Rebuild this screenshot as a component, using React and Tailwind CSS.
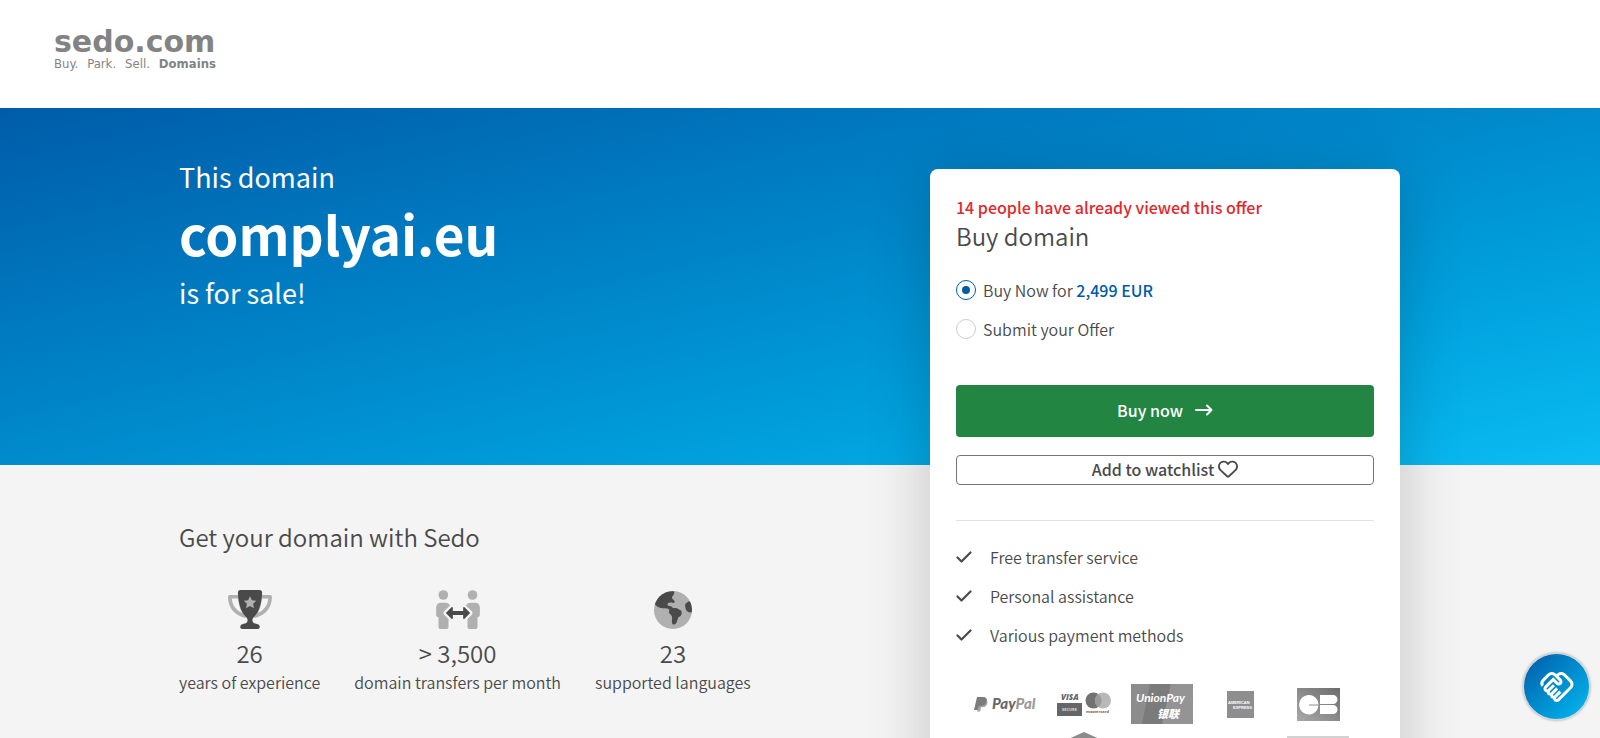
import React, { useState } from 'react';
import { FaRegHeart } from 'react-icons/fa6';
import { MdOutlineHandshake } from 'react-icons/md';

const SERVICES = ['Free transfer service', 'Personal assistance', 'Various payment methods'];

const Logo = () => (
  <a href="#" className="flex w-[162px] flex-col text-[#838383]">
    <span className="font-['DejaVu_Sans'] text-[30px] leading-7 font-bold">sedo.com</span>
    <span className="flex justify-between font-['DejaVu_Sans_Condensed','DejaVu_Sans'] text-[13px] leading-4">
      <span>Buy.</span>
      <span>Park.</span>
      <span>Sell.</span>
      <span className="font-bold">Domains</span>
    </span>
  </a>
);

const TrophyIcon = () => (
  <svg viewBox="0 0 576 512" className="h-[39px] w-11">
    <path
      fill="#b0b0b0"
      fillRule="evenodd"
      d="M24 64C10.7 64 0 74.7 0 88c0 92.6 33.5 157 78.5 200.7 44.3 43.1 98.3 64.8 138.1 75.8h142.8c39.9-11 93.9-32.7 138.2-75.8C542.5 245 576 180.6 576 88c0-13.3-10.7-24-24-24zM48.9 112h84.4c9.1 90.1 29.2 150.3 51.9 190.6-24.9-11-50.8-26.5-73.2-48.3-32-31.1-58-76-63-142.3zM464.1 254.3c-22.4 21.8-48.3 37.3-73.2 48.3 22.7-40.3 42.8-100.5 51.9-190.6h84.4c-5.1 66.3-31.1 111.2-63 142.3z"
    />
    <path
      fill="#4a4a4a"
      d="M162 0h252c20 0 34 15 33 34C441 195 398 300 342 350c-16 14-22 30-22 50 0 21 14 36 38 40l30 8c18 5 28 16 28 36 0 18-8 28-24 28H184c-16 0-24-10-24-28 0-20 10-31 28-36l30-8c24-4 38-19 38-40 0-20-6-36-22-50C178 300 135 195 129 34 128 15 142 0 162 0z"
    />
    <path fill="#b0b0b0" d="M288 82l25 51 57 8-41 40 10 57-51-27-51 27 10-57-41-40 57-8z" />
  </svg>
);

const TransferIcon = () => (
  <svg viewBox="0 0 131 117" className="h-[39px] w-11">
    <g fill="#b0b0b0">
      <circle cx="21.500" cy="15" r="14.500" />
      <circle cx="109" cy="15" r="14.500" />
      <path d="M14 38h14c8 0 14 5 15 12l-6 32v28c0 4-3 7-7 7H14c-4 0-7-3-7-7V82c-4-1-7-4-7-8V52c0-8 6-14 14-14z" />
      <path d="M117 38h-14c-8 0-14 5-15 12l6 32v28c0 4 3 7 7 7h16c4 0 7-3 7-7V82c4-1 7-4 7-8V52c0-8-6-14-14-14z" />
    </g>
    <path
      d="M29 69l17-17c2-2 4-1 4 2v9h31v-9c0-3 2-4 4-2l17 17-17 17c-2 2-4 1-4-2v-9H50v9c0 3-2 4-4 2z"
      fill="#4a4a4a"
      stroke="#f4f4f4"
      strokeWidth="14"
      strokeLinejoin="round"
      paintOrder="stroke"
    />
  </svg>
);

const GlobeIcon = () => (
  <svg viewBox="0 0 512 512" className="size-[38px]">
    <clipPath id="globe">
      <circle cx="256" cy="256" r="256" />
    </clipPath>
    <circle cx="256" cy="256" r="256" fill="#b0b0b0" />
    <g clipPath="url(#globe)" fill="#4a4a4a">
      <path d="M0 160C40 60 140 -10 270 5c6 22 2 40-18 62-14 16-12 30 2 44l20 22c10 14 2 30-14 27l-30-5c-30-5-48 6-48 26 0 12 10 18 24 20l22 4c14 2 22 12 24 25 30-6 72-2 88 20 8 12 28 10 32 28 6 30-6 58-32 70-18 8-18 24-24 44-8 28-20 56-44 60-20 2-28-14-30-36-2-30 6-56-2-78-8-20-34-28-38-52-2-16 6-28 2-38-8-16-46-8-82-16C60 220 30 210 0 160z" />
      <path d="M512 150l-44-12-32 22c-18 12-20 34-14 58 6 26 12 50 34 62l22 10 40-6z" />
    </g>
  </svg>
);

const STATS = [
  { icon: <TrophyIcon />, value: '26', label: 'years of experience' },
  { icon: <TransferIcon />, value: '> 3,500', label: 'domain transfers per month' },
  { icon: <GlobeIcon />, value: '23', label: 'supported languages' },
];

const CheckIcon = () => (
  <svg viewBox="0 0 16 12" className="h-3 w-4" fill="none" stroke="#4a4a4a" strokeWidth="2.200" strokeLinecap="round" strokeLinejoin="round">
    <path d="M1.500 6.500l4 4 9-9" />
  </svg>
);

const PayPal = () => (
  <svg viewBox="0 -4 64 24" className="h-6 w-16">
    <path fill="#7c7c7c" d="M3 1h6c3 0 4.500 1.800 4 4.500C12.400 8.500 10.500 10 7.500 10H5.500L4.500 14H0z" />
    <path fill="#a5a5a5" d="M12.500 4c1 .8 1.200 2 .9 3.300-.6 2.700-2.300 3.900-5 3.900H7L6.200 15.500H3L5 10h2.500c3 0 4.600-2 5-6z" />
    <text x="18" y="13" fontFamily="Lato" fontSize="15" fontWeight="900" fontStyle="italic" fill="#686868">
      Pay<tspan fill="#9a9a9a">Pal</tspan>
    </text>
  </svg>
);

const Cards = () => (
  <svg viewBox="0 0 55 24" className="h-6 w-[55px]">
    <text x="4" y="8" fontFamily="Open Sans" fontSize="8" fontWeight="800" fontStyle="italic" fill="#666">VISA</text>
    <path fill="#666" d="M0 11h25v13H0z" />
    <text x="5" y="19" fontFamily="Open Sans" fontSize="4" fontWeight="700" fill="#ddd">SECURE</text>
    <circle cx="36.500" cy="8.500" r="8" fill="#727272" />
    <circle cx="46" cy="8.500" r="8" fill="#b8b8b8" />
    <path fill="#9a9a9a" d="M41.200 2a8 8 0 0 1 0 13 8 8 0 0 1 0-13z" />
    <text x="29" y="21" fontFamily="Open Sans" fontSize="4" fontWeight="700" fill="#666">mastercard</text>
  </svg>
);

const UnionPay = () => (
  <svg viewBox="0 0 62 40" className="h-10 w-[62px]">
    <path fill="#8c8c8c" d="M0 0h62v40H0z" />
    <path fill="#7b7b7b" d="M19 0h21l-9 40H11z" />
    <path fill="#949494" d="M40 0h22v40H31z" />
    <text x="5" y="18" fontFamily="Lato" fontSize="12" fontWeight="700" fontStyle="italic" fill="#fff">UnionPay</text>
    <text x="26" y="34" fontFamily="Noto Sans CJK SC" fontSize="11" fontWeight="900" fontStyle="italic" fill="#fff">银联</text>
  </svg>
);

const Amex = () => (
  <svg viewBox="0 0 27 27" className="size-[27px]">
    <path fill="#8e8e8e" d="M0 0h27v27H0z" />
    <text x="1" y="13" fontFamily="Liberation Sans" fontSize="4" fontWeight="700" fill="#fff">AMERICAN</text>
    <text x="6" y="18" fontFamily="Liberation Sans" fontSize="4" fontWeight="700" fill="#fff">EXPRESS</text>
  </svg>
);

const CarteBancaire = () => (
  <svg viewBox="0 0 43 33" className="h-[33px] w-[43px]">
    <defs>
      <linearGradient id="cb" x1="0" y1="1" x2="1" y2="0">
        <stop offset="0" stopColor="#a8a8a8" />
        <stop offset="1" stopColor="#6c6c6c" />
      </linearGradient>
    </defs>
    <path fill="url(#cb)" d="M0 0h43v33H0z" />
    <g fill="#fff">
      <path d="M21.500 16.500H12v1h9.500A9.700 9.700 0 1 1 21.500 16z" />
      <path d="M23 7h13a4.500 4.500 0 0 1 0 9H23zM23 17h13a4.500 4.500 0 0 1 0 9H23z" />
    </g>
  </svg>
);

const App = () => {
  const [offerType, setOfferType] = useState('buy');

  const radioClass =
    "flex size-5 shrink-0 appearance-none items-center justify-center rounded-full border border-[#ccc] bg-white before:size-2 before:rounded-full before:content-[''] checked:border-[#005ca9] checked:before:bg-[#005ca9]";

  return (
    <div className="flex h-screen flex-col overflow-hidden bg-[#f4f4f4] font-['Source_Sans_Pro','Noto_Sans_CJK_SC',sans-serif] text-base leading-6 font-[350] text-[#4a4a4a]">
      <header className="shrink-0 bg-white px-[54px] pt-7 pb-9">
        <Logo />
      </header>

      <main className="mx-auto grid w-full grow grid-rows-[357px_auto]">
        <section className="bg-linear-to-br from-[#005ca9] to-[#0bbcf2]">
          <div className="mx-auto flex w-full max-w-[1242px] items-start justify-between pr-[21px]">
            <h1 className="pt-[49px] text-[27px] leading-10 font-normal text-white">
              This domain
              <span className="block pb-1 text-[53px] leading-[72px] font-bold">complyai.eu</span>
              is for sale!
            </h1>

            <aside className="relative mt-[61px] w-[470px] rounded-lg bg-white px-[26px] pt-[26px] pb-10 shadow-[0_8px_64px_rgba(0,0,0,0.2)]">
              <p className="font-medium text-[#e3272b]">14 people have already viewed this offer</p>
              <h2 className="text-2xl leading-[34px]">Buy domain</h2>

              <form className="mt-[17px]" onSubmit={(e) => e.preventDefault()}>
                <label className="flex h-[39px] items-center gap-[7px]">
                  <input type="radio" name="offer" className={radioClass} checked={offerType === 'buy'} onChange={() => setOfferType('buy')} />
                  <span>
                    Buy Now for <strong className="font-medium text-[#005ca9]">2,499 EUR</strong>
                  </span>
                </label>
                <label className="flex h-[39px] items-center gap-[7px]">
                  <input type="radio" name="offer" className={radioClass} checked={offerType === 'offer'} onChange={() => setOfferType('offer')} />
                  <span>Submit your Offer</span>
                </label>

                <button type="submit" className="mt-[37px] flex h-[52px] w-full items-center justify-center gap-3 rounded bg-[#228542] pb-0.5 font-medium text-white">
                  Buy now
                  <svg viewBox="0 0 18 12" className="h-3 w-[18px]" fill="none" stroke="currentColor" strokeWidth="2" strokeLinecap="round" strokeLinejoin="round">
                    <path d="M1 6h15M12 1.500L16.500 6 12 10.500" />
                  </svg>
                </button>
                <button type="button" className="mt-[18px] flex h-[30px] w-full items-center justify-center gap-1 rounded border border-[#757575] pb-0.5 font-medium">
                  Add to watchlist <FaRegHeart className="size-5" />
                </button>
              </form>

              <ul className="mt-[35px] border-t border-[#e3e3e3] pt-4">
                {SERVICES.map((service) => (
                  <li key={service} className="flex h-[39px] items-center gap-[18px]">
                    <CheckIcon />
                    {service}
                  </li>
                ))}
              </ul>

              <div className="mx-auto mt-[30px] grid w-fit grid-cols-[repeat(5,78px)] items-center justify-items-center gap-y-2 pr-1.5">
                <PayPal />
                <Cards />
                <UnionPay />
                <Amex />
                <CarteBancaire />
                <svg viewBox="0 0 36 36" className="col-start-2 size-9">
                  <path fill="#8c8c8c" d="M18 0l18 8v20l-18 8-18-8V8z" />
                </svg>
                <span className="col-start-5 h-7 w-[62px] bg-[#d2d2d2]" />
              </div>
            </aside>
          </div>
        </section>

        <section className="mx-auto w-full max-w-[1242px] pt-[52px]">
          <h2 className="text-2xl leading-10">Get your domain with Sedo</h2>
          <ul className="mt-8 flex gap-[34px]">
            {STATS.map(({ icon, value, label }) => (
              <li key={label} className="flex flex-col items-center">
                <span className="flex h-10 items-end">{icon}</span>
                <span className="mt-[7px] text-2xl leading-[34px]">{value}</span>
                <span>{label}</span>
              </li>
            ))}
          </ul>
        </section>
      </main>

      <button
        type="button"
        aria-label="Contact a broker"
        className="fixed right-[10px] bottom-[18px] flex size-[67px] items-center justify-center rounded-full border border-[#c9d3da] bg-linear-to-br from-[#005ca9] to-[#0bbcf2] text-white shadow-[0_0_3px_rgba(0,0,0,0.4)]"
      >
        <MdOutlineHandshake className="size-9" />
      </button>
    </div>
  );
};

export default App;
